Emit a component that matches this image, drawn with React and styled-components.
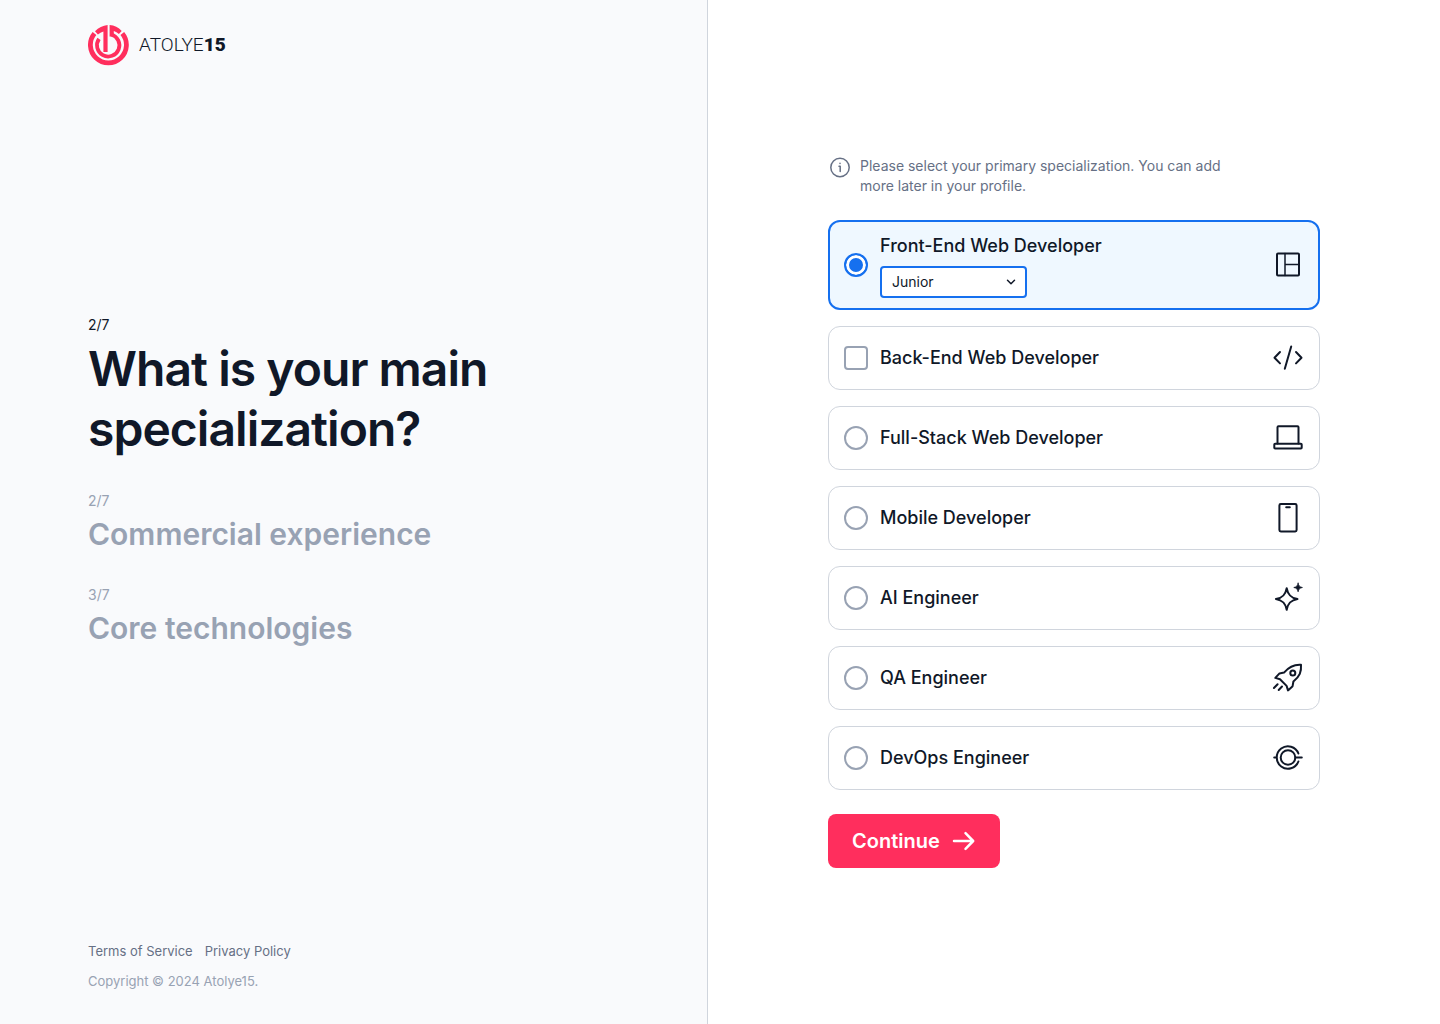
import React, { useState } from "react";
import styled, { createGlobalStyle, css } from "styled-components";

const ink = "#101828";
const slate = "#667085";
const mist = "#98a2b3";
const line = "#d0d5dd";
const blue = "#1570ef";
const brand = "#ff2e5d";

const GlobalStyle = createGlobalStyle`
  *, *::before, *::after { box-sizing: border-box; }
  body {
    margin: 0;
    font-family: Inter, "Liberation Sans", sans-serif;
    color: ${ink};
    background: #fff;
  }
`;

const Page = styled.div`
  display: grid;
  grid-template-columns: 59fr 61fr;
  min-height: 100vh;
`;

const Sidebar = styled.aside`
  display: flex;
  flex-direction: column;
  padding: 24px 88px 33px;
  background: #f9fafc;
  border-right: 1px solid ${line};
`;

const Brand = styled.a`
  display: flex;
  align-items: center;
  gap: 10px;
  color: ${ink};
  text-decoration: none;
`;

const Wordmark = styled.span`
  font: 300 19px/24px Roboto, "Liberation Sans", sans-serif;

  strong { font-weight: 900; }
`;

const Steps = styled.ol`
  flex: 1;
  display: flex;
  flex-direction: column;
  justify-content: center;
  gap: 32px;
  margin: 0;
  padding: 0 0 46px;
  list-style: none;
`;

const Step = styled.li`
  display: grid;
  gap: 4px;
  color: ${(p) => (p.$current ? ink : mist)};
`;

const StepCount = styled.span`
  font-size: 14px;
  line-height: 20px;
`;

const StepTitle = styled.h2`
  margin: 0;
  font-weight: 600;
  font-size: 30px;
  line-height: 38px;
`;

const CurrentTitle = styled.h1`
  margin: 0;
  font-weight: 600;
  font-size: 48px;
  line-height: 60px;
  letter-spacing: -0.02em;
`;

const Footer = styled.footer`
  display: grid;
  gap: 10px;
  font-size: 13px;
  line-height: 20px;
  color: ${mist};
`;

const FooterLinks = styled.nav`
  display: flex;
  gap: 12px;
`;

const FooterLink = styled.a`
  color: ${slate};
  text-decoration: none;
`;

const Copyright = styled.p`
  margin: 0;
`;

const Content = styled.main`
  display: flex;
  flex-direction: column;
  justify-content: center;
  padding: 32px 120px;
`;

const Form = styled.form`
  display: grid;
  gap: 24px;
`;

const Hint = styled.p`
  display: flex;
  gap: 8px;
  max-width: 400px;
  margin: 0;
  font-size: 14px;
  line-height: 20px;
  color: ${slate};

  svg { flex: none; }
`;

const Options = styled.fieldset`
  display: grid;
  gap: 16px;
  min-width: 0;
  margin: 0;
  padding: 0;
  border: 0;
`;

const Option = styled.div`
  display: flex;
  align-items: center;
  gap: 12px;
  min-height: 64px;
  padding: 11px 15px;
  border: 1px solid ${line};
  border-radius: 12px;
  background: #fff;

  ${(p) =>
    p.$selected &&
    css`
      padding: 10px 14px;
      border: 2px solid ${blue};
      background: #eff8ff;
    `}
`;

const OptionBody = styled.div`
  flex: 1;
  display: grid;
  justify-items: start;
  gap: 6px;
`;

const OptionLabel = styled.label`
  font-weight: 500;
  font-size: 18px;
  line-height: 28px;
`;

const Choice = styled.input`
  appearance: none;
  flex: none;
  width: 24px;
  height: 24px;
  margin: 0;
  border: 2px solid ${mist};
  border-radius: ${(p) => (p.type === "radio" ? "50%" : "4px")};
  background: #fff;

  &:checked {
    border-color: ${blue};
    background: ${blue};
    box-shadow: inset 0 0 0 3px #fff;
  }
`;

const SelectWrap = styled.div`
  position: relative;
  width: 147px;

  svg {
    position: absolute;
    top: 8px;
    right: 8px;
    pointer-events: none;
  }
`;

const Select = styled.select`
  appearance: none;
  width: 100%;
  height: 32px;
  padding: 0 32px 0 10px;
  border: 2px solid ${blue};
  border-radius: 4px;
  background: #fff;
  color: ${ink};
  font: 400 14px/20px Inter, "Liberation Sans", sans-serif;
`;

const ContinueButton = styled.button`
  display: flex;
  align-items: center;
  justify-self: start;
  gap: 12px;
  height: 54px;
  padding: 0 24px;
  border: 0;
  border-radius: 8px;
  background: ${brand};
  color: #fff;
  font: 600 20px/30px Inter, "Liberation Sans", sans-serif;
`;

const Icon = ({ size = 32, box = 32, width = 2, children }) => (
  <svg
    width={size}
    height={size}
    viewBox={`0 0 ${box} ${box}`}
    fill="none"
    stroke="currentColor"
    strokeWidth={width}
    strokeLinecap="round"
    strokeLinejoin="round"
    aria-hidden="true"
  >
    {children}
  </svg>
);

const LogoMark = () => (
  <svg width="41" height="42" viewBox="0 0 41 42" fill="none" stroke={brand} aria-hidden="true">
    <path d="M6.500 9.400A18 18 0 1 0 34.300 9.400" strokeWidth="4.800" />
    <path d="M11 14.900A11.200 11.200 0 1 0 23.200 10.500" strokeWidth="3.800" />
    <path d="M19.600 1V28H15.400V7.500C13.400 8.200 11.500 9.200 9.900 10.600L7 7.300C10.600 3.700 14.800 1.500 19.600 1Z" fill={brand} stroke="none" />
    <path d="M21.600 1C26.300 1.400 30.500 3.500 33.700 6.900L30.900 9.900C29.400 8.600 27.700 7.600 25.800 7V12.600L21.600 12.400Z" fill={brand} stroke="none" />
  </svg>
);

const icons = {
  layout: (
    <>
      <rect x="5" y="4.5" width="22" height="22" rx="1" />
      <path d="M13 4.5v22M13 15.5h14" strokeWidth="1.5" />
    </>
  ),
  code: <path d="M8 10 2.5 15.7 8 21.4M24 10l5.5 5.7L24 21.4M19.2 4.4l-6.4 22.4" />,
  laptop: (
    <>
      <path d="M5.5 21.5V5.2a1 1 0 0 1 1-1h19a1 1 0 0 1 1 1v16.3" />
      <rect x="2.3" y="21.8" width="27.4" height="4.7" rx=".8" />
    </>
  ),
  phone: (
    <>
      <rect x="7.4" y="2" width="17.2" height="27.4" rx="1.4" />
      <path d="M14.2 5.2h3.6" />
    </>
  ),
  sparkle: (
    <>
      <path d="M14.7 6.2c1.2 6.6 4.1 9.6 10.8 10.8-6.7 1.2-9.6 4.1-10.8 10.8C13.5 21.1 10.6 18.2 3.9 17c6.7-1.2 9.6-4.2 10.8-10.8Z" />
      <path d="M26.1 1.2c.5 2.7 1.6 3.8 4.3 4.3-2.7.5-3.8 1.6-4.3 4.3-.5-2.7-1.6-3.8-4.3-4.3 2.7-.5 3.8-1.6 4.3-4.3Z" fill="currentColor" strokeWidth=".8" />
    </>
  ),
  rocket: (
    <>
      <path d="M29 2.8C22 2.3 17.3 4.4 12 10.6L7.5 11.4 3.3 15.9 8 17.3 14.6 23.9 16 28.4 20.6 24.2 21.4 19.5C27.8 14.2 29.5 9.8 29 2.8Z" />
      <circle cx="20.8" cy="11" r="2.5" />
      <path d="M5.6 22.2 1.9 26M10 24.5 6.700 28" />
    </>
  ),
  pipeline: (
    <>
      <circle cx="16" cy="15.5" r="7.3" />
      <path d="M26.400 11.500a11.200 11.200 0 1 0 0 8M2.200 15.500h2.600M23.500 15.500h6.300" />
    </>
  ),
};

const options = [
  { id: "frontend", label: "Front-End Web Developer", icon: "layout", type: "radio" },
  { id: "backend", label: "Back-End Web Developer", icon: "code", type: "checkbox" },
  { id: "fullstack", label: "Full-Stack Web Developer", icon: "laptop", type: "radio" },
  { id: "mobile", label: "Mobile Developer", icon: "phone", type: "radio" },
  { id: "ai", label: "AI Engineer", icon: "sparkle", type: "radio" },
  { id: "qa", label: "QA Engineer", icon: "rocket", type: "radio" },
  { id: "devops", label: "DevOps Engineer", icon: "pipeline", type: "radio" },
];

export default function App() {
  const [selected, setSelected] = useState("frontend");

  return (
    <>
      <GlobalStyle />
      <Page>
        <Sidebar>
          <Brand href="#">
            <LogoMark />
            <Wordmark>ATOLYE<strong>15</strong></Wordmark>
          </Brand>
          <Steps>
            <Step $current>
              <StepCount>2/7</StepCount>
              <CurrentTitle>What is your main specialization?</CurrentTitle>
            </Step>
            <Step>
              <StepCount>2/7</StepCount>
              <StepTitle>Commercial experience</StepTitle>
            </Step>
            <Step>
              <StepCount>3/7</StepCount>
              <StepTitle>Core technologies</StepTitle>
            </Step>
          </Steps>
          <Footer>
            <FooterLinks>
              <FooterLink href="#terms">Terms of Service</FooterLink>
              <FooterLink href="#privacy">Privacy Policy</FooterLink>
            </FooterLinks>
            <Copyright>Copyright © 2024 Atolye15.</Copyright>
          </Footer>
        </Sidebar>
        <Content>
          <Form onSubmit={(e) => e.preventDefault()}>
            <Hint>
              <Icon size={24} box={24} width={1.5}>
                <circle cx="12" cy="11.5" r="9.2" />
                <path d="M11 10.300h1.200v5.200M12 7.300v.3" strokeWidth="1.500" />
              </Icon>
              Please select your primary specialization. You can add more later in your profile.
            </Hint>
            <Options aria-label="Primary specialization">
              {options.map(({ id, label, icon, type }) => {
                const active = selected === id;
                return (
                  <Option key={id} $selected={active}>
                    <Choice
                      id={id}
                      type={type}
                      name="specialization"
                      checked={active}
                      onChange={() => setSelected(id)}
                    />
                    <OptionBody>
                      <OptionLabel htmlFor={id}>{label}</OptionLabel>
                      {active && (
                        <SelectWrap>
                          <Select aria-label="Seniority" defaultValue="Junior">
                            <option>Junior</option>
                            <option>Middle</option>
                            <option>Senior</option>
                          </Select>
                          <Icon size={16} box={16} width={1.5}>
                            <path d="m4.500 6.300 3.500 3.500 3.500-3.500" />
                          </Icon>
                        </SelectWrap>
                      )}
                    </OptionBody>
                    <Icon>{icons[icon]}</Icon>
                  </Option>
                );
              })}
            </Options>
            <ContinueButton type="submit">
              Continue
              <Icon size={24} box={24} width={2.5}>
                <path d="M2 12h19M13.500 4.200 21.200 12l-7.700 7.800" />
              </Icon>
            </ContinueButton>
          </Form>
        </Content>
      </Page>
    </>
  );
}
